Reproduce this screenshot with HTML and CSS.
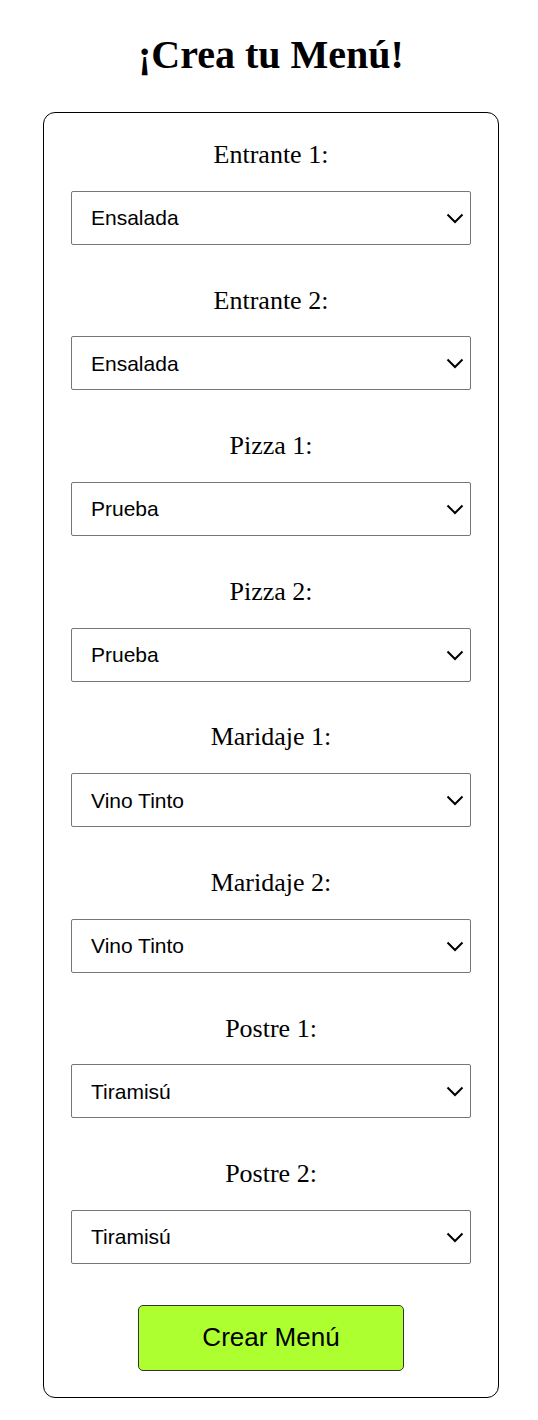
FILE: index.html
```html
<!DOCTYPE html>
<html lang="es">
<head>
<meta charset="utf-8">
<title>Crea tu Menú</title>
<link rel="stylesheet" href="styles.css">
</head>
<body>
<h1 class="title">¡Crea tu Menú!</h1>
<form class="card">
  <div class="group">
    <label class="label">Entrante 1:</label>
    <div class="select-wrap">
      <select class="select"><option>Ensalada</option></select>
      <svg class="chev" width="18" height="11" viewBox="0 0 18 11"><path d="M1.5 1.5 L9 9 L16.5 1.5" fill="none" stroke="#000" stroke-width="2"/></svg>
    </div>
  </div>
  <div class="group">
    <label class="label">Entrante 2:</label>
    <div class="select-wrap">
      <select class="select"><option>Ensalada</option></select>
      <svg class="chev" width="18" height="11" viewBox="0 0 18 11"><path d="M1.5 1.5 L9 9 L16.5 1.5" fill="none" stroke="#000" stroke-width="2"/></svg>
    </div>
  </div>
  <div class="group">
    <label class="label">Pizza 1:</label>
    <div class="select-wrap">
      <select class="select"><option>Prueba</option></select>
      <svg class="chev" width="18" height="11" viewBox="0 0 18 11"><path d="M1.5 1.5 L9 9 L16.5 1.5" fill="none" stroke="#000" stroke-width="2"/></svg>
    </div>
  </div>
  <div class="group">
    <label class="label">Pizza 2:</label>
    <div class="select-wrap">
      <select class="select"><option>Prueba</option></select>
      <svg class="chev" width="18" height="11" viewBox="0 0 18 11"><path d="M1.5 1.5 L9 9 L16.5 1.5" fill="none" stroke="#000" stroke-width="2"/></svg>
    </div>
  </div>
  <div class="group">
    <label class="label">Maridaje 1:</label>
    <div class="select-wrap">
      <select class="select"><option>Vino Tinto</option></select>
      <svg class="chev" width="18" height="11" viewBox="0 0 18 11"><path d="M1.5 1.5 L9 9 L16.5 1.5" fill="none" stroke="#000" stroke-width="2"/></svg>
    </div>
  </div>
  <div class="group">
    <label class="label">Maridaje 2:</label>
    <div class="select-wrap">
      <select class="select"><option>Vino Tinto</option></select>
      <svg class="chev" width="18" height="11" viewBox="0 0 18 11"><path d="M1.5 1.5 L9 9 L16.5 1.5" fill="none" stroke="#000" stroke-width="2"/></svg>
    </div>
  </div>
  <div class="group">
    <label class="label">Postre 1:</label>
    <div class="select-wrap">
      <select class="select"><option>Tiramisú</option></select>
      <svg class="chev" width="18" height="11" viewBox="0 0 18 11"><path d="M1.5 1.5 L9 9 L16.5 1.5" fill="none" stroke="#000" stroke-width="2"/></svg>
    </div>
  </div>
  <div class="group">
    <label class="label">Postre 2:</label>
    <div class="select-wrap">
      <select class="select"><option>Tiramisú</option></select>
      <svg class="chev" width="18" height="11" viewBox="0 0 18 11"><path d="M1.5 1.5 L9 9 L16.5 1.5" fill="none" stroke="#000" stroke-width="2"/></svg>
    </div>
  </div>
  <button type="button" class="btn">Crear Menú</button>
</form>
</body>
</html>
```
FILE: styles.css
```css
html, body {
  background: #fff;
}
body {
  margin: 0;
  padding: 0 6px 0 10px;
  display: flex;
  flex-direction: column;
  align-items: center;
  font-family: "Liberation Serif", "Times New Roman", serif;
  color: #000;
}
.title {
  font-family: "Liberation Serif", "Times New Roman", serif;
  font-weight: bold;
  font-size: 40px;
  line-height: 46px;
  margin: 32px 0 34px;
  text-align: center;
}
.card {
  width: 400px;
  border: 1px solid #000;
  border-radius: 12px;
  padding: 28px 27px 26px;
  display: flex;
  flex-direction: column;
  align-items: center;
}
.group {
  width: 100%;
  display: flex;
  flex-direction: column;
  margin-bottom: 41.8px;
}
.label {
  display: block;
  text-align: center;
  font-size: 26px;
  line-height: 28.8px;
  margin-bottom: 21px;
}
.select-wrap {
  position: relative;
  width: 100%;
}
.select {
  appearance: none;
  -webkit-appearance: none;
  display: block;
  width: 100%;
  height: 54px;
  box-sizing: border-box;
  border: 1px solid #767676;
  border-radius: 2px;
  background: #fff;
  padding: 0 40px 0 19px;
  font-family: "Liberation Sans", Arial, sans-serif;
  font-size: 21px;
  color: #000;
}
.chev {
  position: absolute;
  right: 7px;
  top: 22px;
  pointer-events: none;
}
.btn {
  width: 266px;
  height: 66px;
  background: #adff2f;
  border: 1px solid #333;
  border-radius: 5px;
  font-family: "Liberation Sans", Arial, sans-serif;
  font-size: 26px;
  color: #000;
  padding: 0;
  cursor: pointer;
  margin-top: -0.8px;
}
```
